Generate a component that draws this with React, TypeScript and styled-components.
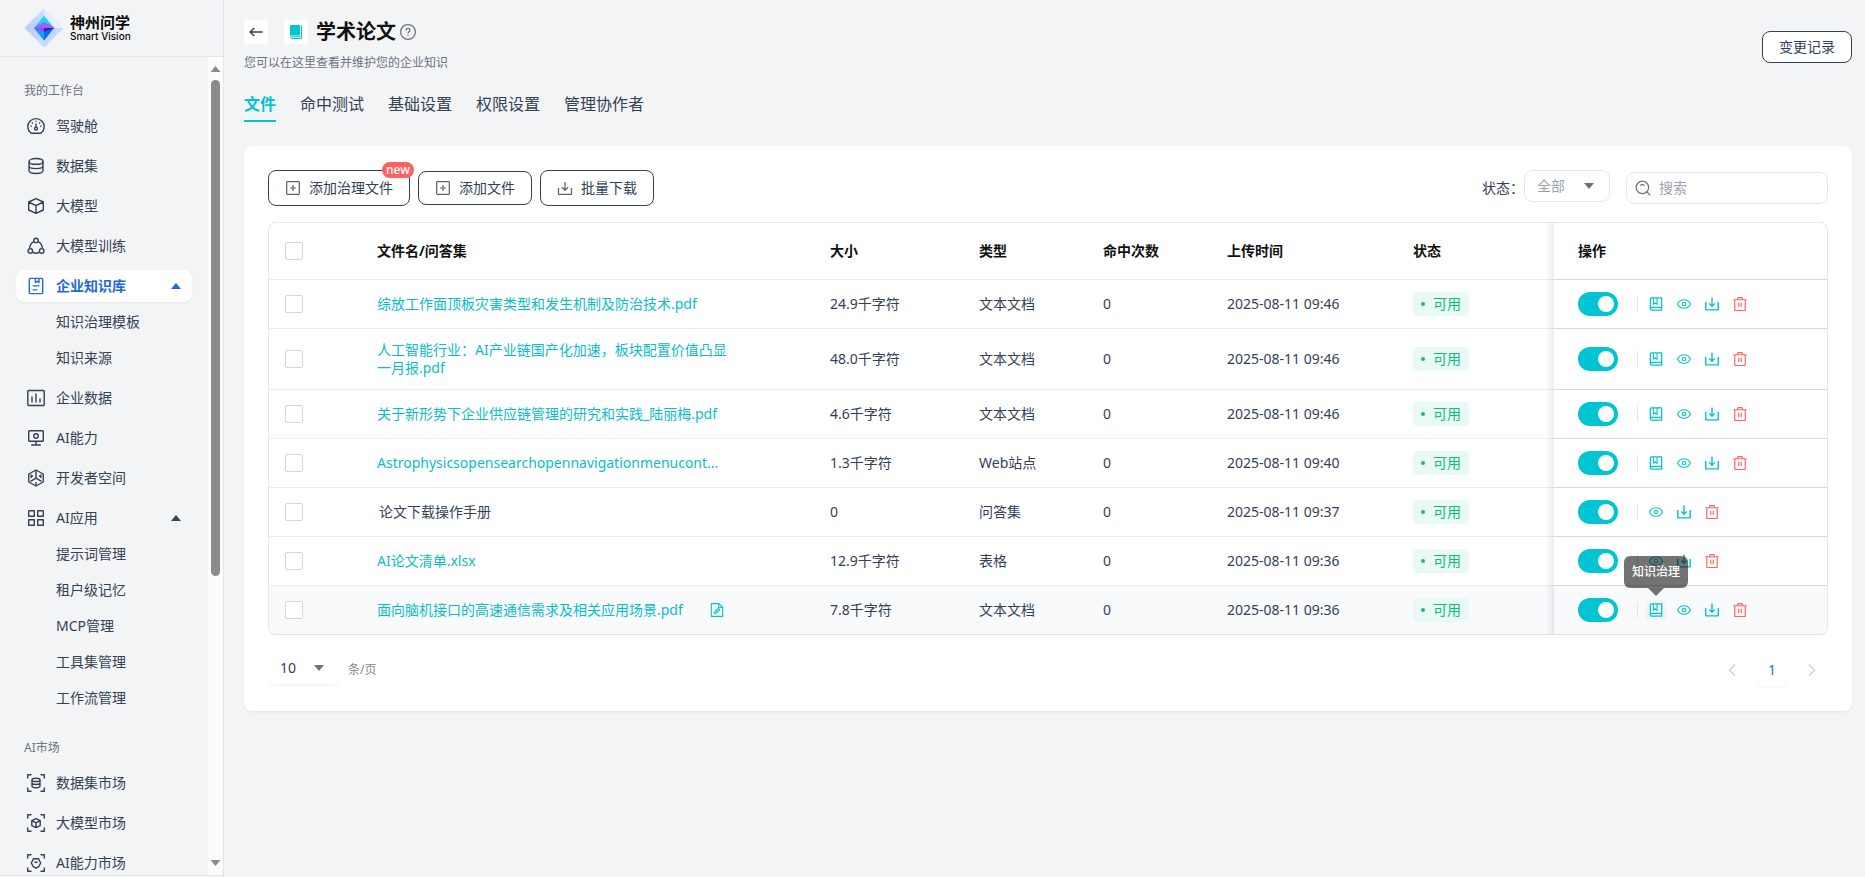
import React from "react";
import styled, { createGlobalStyle, css } from "styled-components";

const teal = "#00c4d1";
const ink = "#334155";
const red = "#ff6464";

const GlobalStyle = createGlobalStyle`
  *, *::before, *::after { box-sizing: border-box; }
  body {
    margin: 0;
    background: #f3f4f6;
    color: ${ink};
    font: 14px/20px "Noto Sans", "Noto Sans CJK SC", sans-serif;
  }
  button, input, select { font: inherit; color: inherit; }
  a { color: inherit; text-decoration: none; }
  h1, p { margin: 0; }
`;

/* ---------- icons ---------- */

const Svg = styled.svg<{ $size?: number }>`
  display: block;
  flex: none;
  width: ${(p) => p.$size ?? 18}px;
  height: ${(p) => p.$size ?? 18}px;
  fill: none;
  stroke: currentColor;
  stroke-width: 1.4;
  stroke-linejoin: round;
`;

type IconProps = { name: string; size?: number };

const glyphs: Record<string, React.ReactNode> = {
  gauge: (
    <>
      <path d="M4 16.3A8.2 8.2 0 1 1 14 16.3Z" />
      <circle cx="9" cy="11.6" r="1.5" />
      <path d="M9 10V6.6M9 3.8v1M3.6 9.3h1.2M13.2 9.3h1.2M5 5.6l.9.9M13 5.6l-.9.9" />
    </>
  ),
  database: (
    <>
      <ellipse cx="9" cy="4.4" rx="7" ry="2.9" />
      <path d="M2 4.4v9.2c0 1.6 3.1 2.9 7 2.9s7-1.3 7-2.9V4.4M2 9c0 1.5 3.1 2.6 7 2.6s7-1.1 7-2.6" />
    </>
  ),
  cube: (
    <path d="M9 1.6 16.3 5v8L9 16.4 1.7 13V5ZM1.7 5 9 8.6 16.3 5M9 8.6v7.8" />
  ),
  nodes: (
    <>
      <circle cx="9" cy="3.4" r="2.2" />
      <circle cx="3.3" cy="13.9" r="2.3" />
      <circle cx="14.7" cy="13.9" r="2.3" />
      <path d="M6.9 4.3C4.4 5.6 2.7 8.3 2.7 11.5M11.1 4.3c2.5 1.3 4.2 4 4.2 7.2M5.6 15.1c2 1.4 4.8 1.4 6.8 0" />
    </>
  ),
  ledger: (
    <>
      <rect x="2.3" y="1.4" width="13.4" height="15.2" rx="1" />
      <path d="M8.4 1.5v4l1.8-1.2L12 5.5v-4M5.6 8.9h6.8M5.6 12.9h4.6" />
    </>
  ),
  bars: (
    <>
      <rect x="0.8" y="1.5" width="16.4" height="15" rx="0.8" />
      <path d="M5 7.5v6M9 4.5v9M13 9.5v4" />
    </>
  ),
  monitor: (
    <>
      <rect x="1.7" y="1.7" width="14.6" height="10.6" rx="0.8" />
      <circle cx="9" cy="7" r="2.3" />
      <path d="M9 12.5v3.2M4.2 16h9.6" />
    </>
  ),
  hex: (
    <>
      <path d="M9 1 16.2 5v8L9 17 1.8 13V5Z" />
      <path d="M9 1.5v7.700M9 9.2 3.600 12.300M9 9.200l5.400 3.100M4.200 5.500v3.500M13.800 5.500v3.500M4.200 6.300l1.800 1M13.800 6.300l-1.800 1M9 13v3.500" />
    </>
  ),
  grid: (
    <>
      <rect x="1.7" y="1.7" width="5.6" height="5.6" />
      <rect x="10.7" y="1.7" width="5.6" height="5.6" />
      <rect x="1.7" y="10.7" width="5.6" height="5.6" />
      <rect x="10.7" y="10.7" width="5.6" height="5.6" />
    </>
  ),
  scanDb: (
    <>
      <path d="M.7 4.5V.7h3.8M13.5.7h3.8v3.8M17.3 13.5v3.8h-3.8M4.5 17.3H.7v-3.8" />
      <ellipse cx="9" cy="5.9" rx="4" ry="1.6" />
      <path d="M5 5.9v6.2c0 1 1.8 1.7 4 1.7s4-.7 4-1.7V5.9M5 9c0 .9 1.8 1.5 4 1.5s4-.6 4-1.5" />
    </>
  ),
  scanCube: (
    <>
      <path d="M.7 4.5V.7h3.8M13.5.7h3.8v3.8M17.3 13.5v3.8h-3.8M4.5 17.3H.7v-3.8" />
      <path d="M9 4.6 13.2 6.6v5L9 13.6 4.8 11.6v-5ZM4.8 6.6 9 8.8l4.2-2.2M9 8.8v4.8" />
    </>
  ),
  scanChip: (
    <>
      <path d="M.7 4.5V.7h3.8M13.5.7h3.8v3.8M17.3 13.5v3.8h-3.8M4.5 17.3H.7v-3.8" />
      <path d="M6.6 4.7h4.8L13.7 9l-2 3.6L9 14.2l-2.7-1.6L4.3 9ZM7.4 7.8c1 .8 2.2.8 3.2 0" />
    </>
  ),
  back: <path d="M16.500 9h-14M7 4.500 2.300 9 7 13.500" strokeWidth="1.700" />,
  help: (
    <>
      <circle cx="9" cy="9" r="8.3" />
      <path d="M6.8 7.2c0-1.4 1-2.2 2.2-2.2s2.2.8 2.2 2c0 1.6-2.2 1.7-2.2 3.6M9 12v1.4" />
    </>
  ),
  plus: (
    <>
      <rect x="1.9" y="1.9" width="14.2" height="14.2" rx="0.8" />
      <path d="M9 5.6v6.8M5.6 9h6.8" />
    </>
  ),
  download: <path d="M1.7 9v7.1h14.6V9M9 2.2v9.2M5.6 8.200 9 11.600l3.400-3.400" />,
  save: <path d="M1 6.500v10h16v-10M9 .5v11.200M5.400 8.200 9 11.800l3.600-3.600" strokeWidth="1.800" />,
  search: (
    <>
      <circle cx="8.3" cy="8.3" r="7" />
      <path d="m13.3 13.3 3.8 3.8M5.9 6.2c1.4-1.2 3.4-1.2 4.8 0" />
    </>
  ),
  book: (
    <>
      <path d="M1.700 15.200V2.300C1.700 1.500 2.200 1 3 1H16.300v16H3.500c-1.100 0-1.800-.8-1.800-1.800s.7-1.800 1.800-1.800H16.300" strokeWidth="1.600" />
      <path d="M5.600 1.200v8.200L8 7.400l2.400 2v-8.200" />
    </>
  ),
  eye: (
    <>
      <path d="M.6 9C2.300 5.600 5.400 3.500 9 3.500s6.700 2.100 8.400 5.500c-1.700 3.400-4.800 5.500-8.400 5.500S2.300 12.400.6 9Z" />
      <circle cx="9" cy="9" r="2.3" />
    </>
  ),
  trash: (
    <path
      d="M.3 3.500h17.400M2.300 3.500v14h13.400v-14M5.500 3.300l1-2.600h5l1 2.600M7.400 7.500v5.500M10.600 7.500v5.500"
      strokeWidth="1.500"
    />
  ),
  fileEdit: (
    <>
      <path d="M1.700.8h9.800l4.800 4.700v11.700H1.700ZM11.200 1v4.800h5" />
      <path d="m5.800 13.300.5-2.600L10.800 7l1.700 1.800-4.400 4ZM8 9.700l1.800 1.800" />
    </>
  ),
  prev: <path d="M13 2 5.500 9l7.500 7" strokeWidth="2" />,
  next: <path d="M5 2l7.500 7L5 16" strokeWidth="2" />,
};

const Icon = ({ name, size }: IconProps) => (
  <Svg $size={size} viewBox="0 0 18 18" aria-hidden="true">
    {glyphs[name]}
  </Svg>
);

const Caret = styled.span<{ $up?: boolean }>`
  flex: none;
  width: 10px;
  height: 6px;
  background: currentColor;
  clip-path: ${(p) => (p.$up ? "polygon(50% 0, 100% 100%, 0 100%)" : "polygon(0 0, 100% 0, 50% 100%)")};
`;

/* ---------- shell ---------- */

const Page = styled.div`
  display: flex;
  min-height: 100vh;
`;

const Sidebar = styled.aside`
  flex: none;
  display: flex;
  flex-direction: column;
  width: 224px;
  height: 100vh;
  padding-bottom: 1px;
  border-right: 1px solid #e3e5e8;
`;

const Brand = styled.div`
  flex: none;
  display: flex;
  align-items: center;
  gap: 6px;
  height: 57px;
  padding-left: 24px;
  border-bottom: 1px solid #e3e5e8;
`;

const Mark = styled.svg`
  width: 40px;
  height: 40px;
`;

const BrandText = styled.div`
  display: flex;
  flex-direction: column;
  color: #0a0a0a;
`;

const BrandName = styled.span`
  font-size: 15px;
  line-height: 16px;
  font-weight: 700;
`;

const BrandLatin = styled.span`
  font: 500 10px/12px "Inter", sans-serif;
`;

const SideBody = styled.div`
  flex: 1;
  display: flex;
  min-height: 0;
  border-bottom: 1px solid #e3e5e8;
`;

const Nav = styled.nav`
  flex: 1;
  overflow: hidden;
  padding: 0 16px;
`;

const GroupLabel = styled.div`
  margin: 24px 0 9px;
  padding-left: 8px;
  font-size: 12px;
  color: #6b7280;
`;

const NavItem = styled.a<{ $active?: boolean }>`
  display: flex;
  align-items: center;
  gap: 11px;
  height: 32px;
  margin-bottom: 8px;
  padding: 0 11px;
  border-radius: 8px;
  ${(p) =>
    p.$active &&
    css`
      background: #fff;
      color: #2468dd;
      font-weight: 700;
      box-shadow: 0 1px 2px rgba(0, 0, 0, 0.06);
    `}
  ${Caret} { margin-left: auto; }
`;

const SubList = styled.div`
  margin: -4px 0 8px;
`;

const SubItem = styled.a`
  display: block;
  margin-bottom: 4px;
  padding: 6px 0 6px 40px;
`;

const ScrollTrack = styled.div`
  flex: none;
  display: flex;
  flex-direction: column;
  align-items: center;
  gap: 8px;
  width: 15px;
  padding: 9px 0;
  background: #fcfcfc;
  color: #8b8b8b;
`;

const ScrollThumb = styled.div`
  flex: 0 0 62%;
  width: 9px;
  border-radius: 5px;
  background: #8b8b8b;
`;

const Spacer = styled.div`
  flex: 1;
`;

const Main = styled.main`
  flex: 1;
  min-width: 0;
  padding: 20px 13px 24px 20px;
`;

/* ---------- page header ---------- */

const Header = styled.header`
  display: flex;
  justify-content: space-between;
  align-items: center;
`;

const TitleRow = styled.div`
  display: flex;
  align-items: center;
  height: 24px;
`;

const Tile = styled.button`
  display: grid;
  place-items: center;
  width: 24px;
  height: 24px;
  padding: 0;
  border: 0;
  border-radius: 4px;
  background: #fff;
`;

const BookTile = styled(Tile).attrs({ as: "span" })`
  margin: 0 8px 0 16px;
`;

const Title = styled.h1`
  margin-right: 4px;
  font-size: 20px;
  line-height: 24px;
  font-weight: 700;
  color: #111;
`;

const HelpMark = styled.span`
  color: #6b7280;
`;

const Subtitle = styled.p`
  margin-top: 9px;
  font-size: 12px;
  color: #6b7280;
`;

const OutlineButton = styled.button<{ $height?: number }>`
  position: relative;
  display: flex;
  align-items: center;
  gap: 8px;
  height: ${(p) => p.$height ?? 36}px;
  padding: 0 16px;
  border: 1px solid ${ink};
  border-radius: 8px;
  background: #fff;
  white-space: nowrap;
  svg { color: #596376; }
`;

const Tabs = styled.nav`
  display: flex;
  gap: 24px;
  margin: 19px 0 24px;
`;

const Tab = styled.a<{ $active?: boolean }>`
  padding-bottom: 4px;
  border-bottom: 2px solid ${(p) => (p.$active ? teal : "transparent")};
  font-size: 16px;
  line-height: 24px;
  color: ${(p) => (p.$active ? teal : ink)};
  font-weight: ${(p) => (p.$active ? 700 : 400)};
`;

/* ---------- card ---------- */

const Card = styled.section`
  padding: 24px;
  border-radius: 8px;
  background: #fff;
  box-shadow: 0 1px 3px rgba(0, 0, 0, 0.06);
`;

const Toolbar = styled.div`
  display: flex;
  align-items: center;
  gap: 8px;
  height: 36px;
  margin-bottom: 16px;
`;

const NewBadge = styled.span`
  position: absolute;
  top: -9px;
  right: -5px;
  width: 32px;
  border-radius: 8px;
  background: #ff6060;
  color: #fff;
  font-size: 12px;
  font-weight: 500;
  line-height: 16px;
  text-align: center;
`;

const Filter = styled.div`
  display: flex;
  align-items: center;
  height: 100%;
  margin-left: auto;
`;

const SelectBox = styled.div<{ $kind: "filter" | "size" }>`
  position: relative;
  align-self: flex-start;
  width: ${(p) => (p.$kind === "filter" ? 86 : 72)}px;
  height: 32px;
  color: ${(p) => (p.$kind === "filter" ? "#9ca3af" : ink)};

  select {
    appearance: none;
    width: 100%;
    height: 100%;
    padding: 0 12px;
    border-radius: 8px;
    border: ${(p) => (p.$kind === "filter" ? "1px solid #e5e7eb" : "0")};
    background: #fff;
    box-shadow: ${(p) => (p.$kind === "filter" ? "none" : "0 2px 2px rgba(0, 0, 0, 0.04)")};
  }
  ${Caret} {
    position: absolute;
    top: 13px;
    right: 16px;
    color: #6b7280;
    pointer-events: none;
  }
`;

const Search = styled.label`
  display: flex;
  align-items: center;
  gap: 8px;
  width: 202px;
  height: 32px;
  margin-left: 8px;
  padding: 0 8px;
  border: 1px solid #e5e7eb;
  border-radius: 8px;
  color: #6b7280;
  input {
    flex: 1;
    min-width: 0;
    padding: 0;
    border: 0;
    outline: 0;
    background: none;
  }
  input::placeholder { color: #9ca3af; opacity: 1; }
`;

const TableFrame = styled.div`
  overflow: hidden;
  border: 1px solid #e5e7eb;
  border-bottom-color: #dfe2e6;
  border-radius: 8px;
`;

const Table = styled.table`
  width: 100%;
  table-layout: fixed;
  border-collapse: separate;
  border-spacing: 0;
  text-align: left;

  th, td {
    padding: 0 16px;
    border-bottom: 1px solid #ebedef;
  }
  th {
    height: 57px;
    color: #111;
    font-weight: 700;
  }
  td { height: 49px; }
  tbody tr:last-child td {
    height: 48px;
    border-bottom: 0;
    background: #f8fafc;
  }
  th:last-child, td:last-child {
    position: relative;
    padding: 0 24px;
    border-bottom-color: #d6dade;
  }
  th:last-child::before, td:last-child::before {
    content: "";
    position: absolute;
    top: 0;
    bottom: -1px;
    left: -8px;
    width: 8px;
    background: linear-gradient(to right, transparent, rgba(60, 70, 80, 0.1));
  }
`;

const Col = styled.col<{ $w: number }>`
  width: ${(p) => p.$w}px;
`;

const Check = styled.input.attrs({ type: "checkbox" })`
  appearance: none;
  display: block;
  width: 18px;
  height: 18px;
  margin: 0;
  border: 1px solid #d4d6d9;
  border-radius: 2px;
  background: #fff;
`;

const NameCell = styled.div`
  display: flex;
  align-items: center;
  gap: 24px;
  max-width: 350px;
  line-height: 18px;
`;

const FileLink = styled.a`
  color: #0cbccb;
  word-break: break-all;
`;

const PlainName = styled.span`
  padding-left: 2px;
`;

const TallCell = styled.td`
  && { height: 61px; }
`;

const Status = styled.span`
  display: inline-flex;
  align-items: center;
  gap: 8px;
  height: 24px;
  padding: 0 8px;
  border-radius: 4px;
  background: #e9faf5;
  color: #12b981;
  vertical-align: top;
  &::before {
    content: "";
    width: 4px;
    height: 4px;
    border-radius: 50%;
    background: currentColor;
  }
`;

const Actions = styled.div`
  display: flex;
  align-items: center;
  gap: 8px;
`;

const Toggle = styled.input.attrs({ type: "checkbox", role: "switch" })`
  appearance: none;
  width: 40px;
  height: 24px;
  margin: 0;
  padding: 4px;
  border-radius: 12px;
  background: #b8bec6;
  &::before {
    content: "";
    display: block;
    width: 16px;
    height: 16px;
    border-radius: 50%;
    background: #fff;
  }
  &:checked { background: ${teal}; }
  &:checked::before { margin-left: auto; }
`;

const Divider = styled.span`
  width: 1px;
  height: 16px;
  margin-left: 11px;
  background: #e2e4e8;
`;

const IconButton = styled.button<{ $danger?: boolean; $hovered?: boolean }>`
  position: relative;
  display: grid;
  place-items: center;
  width: 20px;
  height: 20px;
  padding: 0;
  border: 0;
  border-radius: 2px;
  background: ${(p) => (p.$hovered ? "#f1f3f5" : "none")};
  color: ${(p) => (p.$danger ? red : teal)};
`;

const Tooltip = styled.span`
  position: absolute;
  z-index: 2;
  bottom: 32px;
  left: -22px;
  width: 64px;
  border-radius: 6px;
  background: rgba(0, 0, 0, 0.55);
  color: #fff;
  font-size: 12px;
  font-weight: 500;
  line-height: 32px;
  text-align: center;
  &::after {
    content: "";
    position: absolute;
    top: 100%;
    left: 24px;
    border: 8px solid transparent;
    border-top-color: rgba(0, 0, 0, 0.55);
    border-bottom: 0;
  }
`;

const Footer = styled.footer`
  display: flex;
  align-items: center;
  gap: 8px;
  height: 35px;
  margin-top: 17px;
`;

const PerPage = styled.span`
  font-size: 12px;
  color: #888;
`;

const Pager = styled.div`
  display: flex;
  align-items: center;
  gap: 16px;
  margin-left: auto;
  padding-right: 8px;
`;

const PagerArrow = styled.button`
  display: grid;
  place-items: center;
  width: 16px;
  height: 24px;
  padding: 0;
  border: 0;
  background: none;
  color: #d0d2d5;
`;

const PageNumber = styled.button`
  width: 32px;
  height: 32px;
  padding: 0;
  border: 0;
  border-radius: 8px;
  background: #fff;
  color: #2f6be4;
  box-shadow: 0 2px 2px rgba(0, 0, 0, 0.04);
`;

/* ---------- data ---------- */

type Entry = { icon: string; label: string; active?: boolean; children?: string[] };

const workbench: Entry[] = [
  { icon: "gauge", label: "驾驶舱" },
  { icon: "database", label: "数据集" },
  { icon: "cube", label: "大模型" },
  { icon: "nodes", label: "大模型训练" },
  { icon: "ledger", label: "企业知识库", active: true, children: ["知识治理模板", "知识来源"] },
  { icon: "bars", label: "企业数据" },
  { icon: "monitor", label: "AI能力" },
  { icon: "hex", label: "开发者空间" },
  {
    icon: "grid",
    label: "AI应用",
    children: ["提示词管理", "租户级记忆", "MCP管理", "工具集管理", "工作流管理"],
  },
];

const market: Entry[] = [
  { icon: "scanDb", label: "数据集市场" },
  { icon: "scanCube", label: "大模型市场" },
  { icon: "scanChip", label: "AI能力市场" },
];

type FileRow = {
  name: string;
  size: string;
  type: string;
  time: string;
  plain?: boolean;
  tall?: boolean;
  govern?: boolean;
  hovered?: boolean;
};

const rows: FileRow[] = [
  { name: "综放工作面顶板灾害类型和发生机制及防治技术.pdf", size: "24.9千字符", type: "文本文档", time: "2025-08-11 09:46", govern: true },
  { name: "人工智能行业：AI产业链国产化加速，板块配置价值凸显一月报.pdf", size: "48.0千字符", type: "文本文档", time: "2025-08-11 09:46", govern: true, tall: true },
  { name: "关于新形势下企业供应链管理的研究和实践_陆丽梅.pdf", size: "4.6千字符", type: "文本文档", time: "2025-08-11 09:46", govern: true },
  { name: "Astrophysicsopensearchopennavigationmenucont...", size: "1.3千字符", type: "Web站点", time: "2025-08-11 09:40", govern: true },
  { name: "论文下载操作手册", size: "0", type: "问答集", time: "2025-08-11 09:37", plain: true },
  { name: "AI论文清单.xlsx", size: "12.9千字符", type: "表格", time: "2025-08-11 09:36" },
  { name: "面向脑机接口的高速通信需求及相关应用场景.pdf", size: "7.8千字符", type: "文本文档", time: "2025-08-11 09:36", govern: true, hovered: true },
];

const NavGroup = ({ title, entries }: { title: string; entries: Entry[] }) => (
  <>
    <GroupLabel>{title}</GroupLabel>
    {entries.map((e) => (
      <React.Fragment key={e.label}>
        <NavItem href="#" $active={e.active}>
          <Icon name={e.icon} />
          {e.label}
          {e.children && <Caret $up />}
        </NavItem>
        {e.children && (
          <SubList>
            {e.children.map((c) => (
              <SubItem key={c} href="#">
                {c}
              </SubItem>
            ))}
          </SubList>
        )}
      </React.Fragment>
    ))}
  </>
);

const Logo = () => (
  <Mark viewBox="0 0 40 40" aria-hidden="true">
    <defs>
      <linearGradient id="halo" x1="0" x2="1">
        <stop offset="0" stopColor="#b4ccff" />
        <stop offset="1" stopColor="#dfeaff" />
      </linearGradient>
      <linearGradient id="top" x1="0" y1="0" x2="0" y2="1">
        <stop offset="0" stopColor="#19e6ee" />
        <stop offset="1" stopColor="#2f9bf5" />
      </linearGradient>
    </defs>
    <path d="M20 .5 39.5 20 20 39.5.5 20Z" fill="url(#halo)" />
    <path d="M20 .5 39.5 20H20Z" fill="#e6eeff" />
    <path d="M20 39.5 39.5 20H20Z" fill="#c3d8ff" />
    <path d="M20 7.500 30 20 20 32.500 10 20Z" fill="url(#top)" />
    <path d="M10 20 20 32.500V22Z" fill="#14a0f6" />
    <path d="M30 20 20 32.500V22Z" fill="#0a6cf0" />
    <path d="M20 14 30.500 20H9.500Z" fill="#a45cf6" />
    <path d="M9.500 20H20v4Z" fill="#8a50f0" />
    <path d="M30.500 20H20v4Z" fill="#3c1fae" />
  </Mark>
);

export default function App() {
  return (
    <Page>
      <GlobalStyle />
      <Sidebar>
        <Brand>
          <Logo />
          <BrandText>
            <BrandName>神州问学</BrandName>
            <BrandLatin>Smart Vision</BrandLatin>
          </BrandText>
        </Brand>
        <SideBody>
          <Nav>
            <NavGroup title="我的工作台" entries={workbench} />
            <NavGroup title="AI市场" entries={market} />
          </Nav>
          <ScrollTrack>
            <Caret $up />
            <ScrollThumb />
            <Spacer />
            <Caret />
          </ScrollTrack>
        </SideBody>
      </Sidebar>

      <Main>
        <Header>
          <div>
            <TitleRow>
              <Tile aria-label="返回">
                <Icon name="back" size={16} />
              </Tile>
              <BookTile>
                <svg width="14" height="16" viewBox="0 0 14 16" aria-hidden="true">
                  <path d="M2.500 1H11v10.500H2.800C2 11.500 1.400 11.800 1 12.300V2.500C1 1.700 1.700 1 2.500 1Z" fill={teal} />
                  <path d="M12.600 1.500v13H3c-.9 0-1.500-.5-1.500-1.100S2.100 12.700 3 12.700h8.500" fill="none" stroke={teal} />
                </svg>
              </BookTile>
              <Title>学术论文</Title>
              <HelpMark>
                <Icon name="help" size={16} />
              </HelpMark>
            </TitleRow>
            <Subtitle>您可以在这里查看并维护您的企业知识</Subtitle>
          </div>
          <OutlineButton $height={32}>变更记录</OutlineButton>
        </Header>

        <Tabs>
          <Tab href="#" $active>文件</Tab>
          <Tab href="#">命中测试</Tab>
          <Tab href="#">基础设置</Tab>
          <Tab href="#">权限设置</Tab>
          <Tab href="#">管理协作者</Tab>
        </Tabs>

        <Card>
          <Toolbar>
            <OutlineButton>
              <Icon name="plus" size={16} />
              添加治理文件
              <NewBadge>new</NewBadge>
            </OutlineButton>
            <OutlineButton $height={34}>
              <Icon name="plus" size={16} />
              添加文件
            </OutlineButton>
            <OutlineButton>
              <Icon name="download" size={16} />
              批量下载
            </OutlineButton>
            <Filter>
              <label htmlFor="status">状态：</label>
              <SelectBox $kind="filter">
                <select id="status">
                  <option>全部</option>
                </select>
                <Caret />
              </SelectBox>
            </Filter>
            <Search>
              <Icon name="search" size={16} />
              <input type="text" placeholder="搜索" aria-label="搜索" />
            </Search>
          </Toolbar>

          <TableFrame>
            <Table>
              <colgroup>
                {[92, 453, 149, 124, 124, 186, 157, 273].map((w, i) => (
                  <Col key={i} $w={w} />
                ))}
              </colgroup>
              <thead>
                <tr>
                  <th><Check aria-label="全选" /></th>
                  <th>文件名/问答集</th>
                  <th>大小</th>
                  <th>类型</th>
                  <th>命中次数</th>
                  <th>上传时间</th>
                  <th>状态</th>
                  <th>操作</th>
                </tr>
              </thead>
              <tbody>
                {rows.map((r) => {
                  const First = r.tall ? TallCell : "td";
                  return (
                    <tr key={r.name}>
                      <First><Check aria-label={r.name} /></First>
                      <td>
                        <NameCell>
                          {r.plain ? <PlainName>{r.name}</PlainName> : <FileLink href="#">{r.name}</FileLink>}
                          {r.hovered && (
                            <IconButton aria-label="重命名">
                              <Icon name="fileEdit" size={14} />
                            </IconButton>
                          )}
                        </NameCell>
                      </td>
                      <td>{r.size}</td>
                      <td>{r.type}</td>
                      <td>0</td>
                      <td>{r.time}</td>
                      <td><Status>可用</Status></td>
                      <td>
                        <Actions>
                          <Toggle defaultChecked aria-label="启用" />
                          <Divider />
                          {r.govern && (
                            <IconButton aria-label="知识治理" $hovered={r.hovered}>
                              <Icon name="book" size={14} />
                              {r.hovered && <Tooltip role="tooltip">知识治理</Tooltip>}
                            </IconButton>
                          )}
                          <IconButton aria-label="查看"><Icon name="eye" size={14} /></IconButton>
                          <IconButton aria-label="下载"><Icon name="save" size={14} /></IconButton>
                          <IconButton aria-label="删除" $danger><Icon name="trash" size={14} /></IconButton>
                        </Actions>
                      </td>
                    </tr>
                  );
                })}
              </tbody>
            </Table>
          </TableFrame>

          <Footer>
            <SelectBox $kind="size">
              <select aria-label="每页条数">
                <option>10</option>
              </select>
              <Caret />
            </SelectBox>
            <PerPage>条/页</PerPage>
            <Pager>
              <PagerArrow aria-label="上一页"><Icon name="prev" size={14} /></PagerArrow>
              <PageNumber>1</PageNumber>
              <PagerArrow aria-label="下一页"><Icon name="next" size={14} /></PagerArrow>
            </Pager>
          </Footer>
        </Card>
      </Main>
    </Page>
  );
}
